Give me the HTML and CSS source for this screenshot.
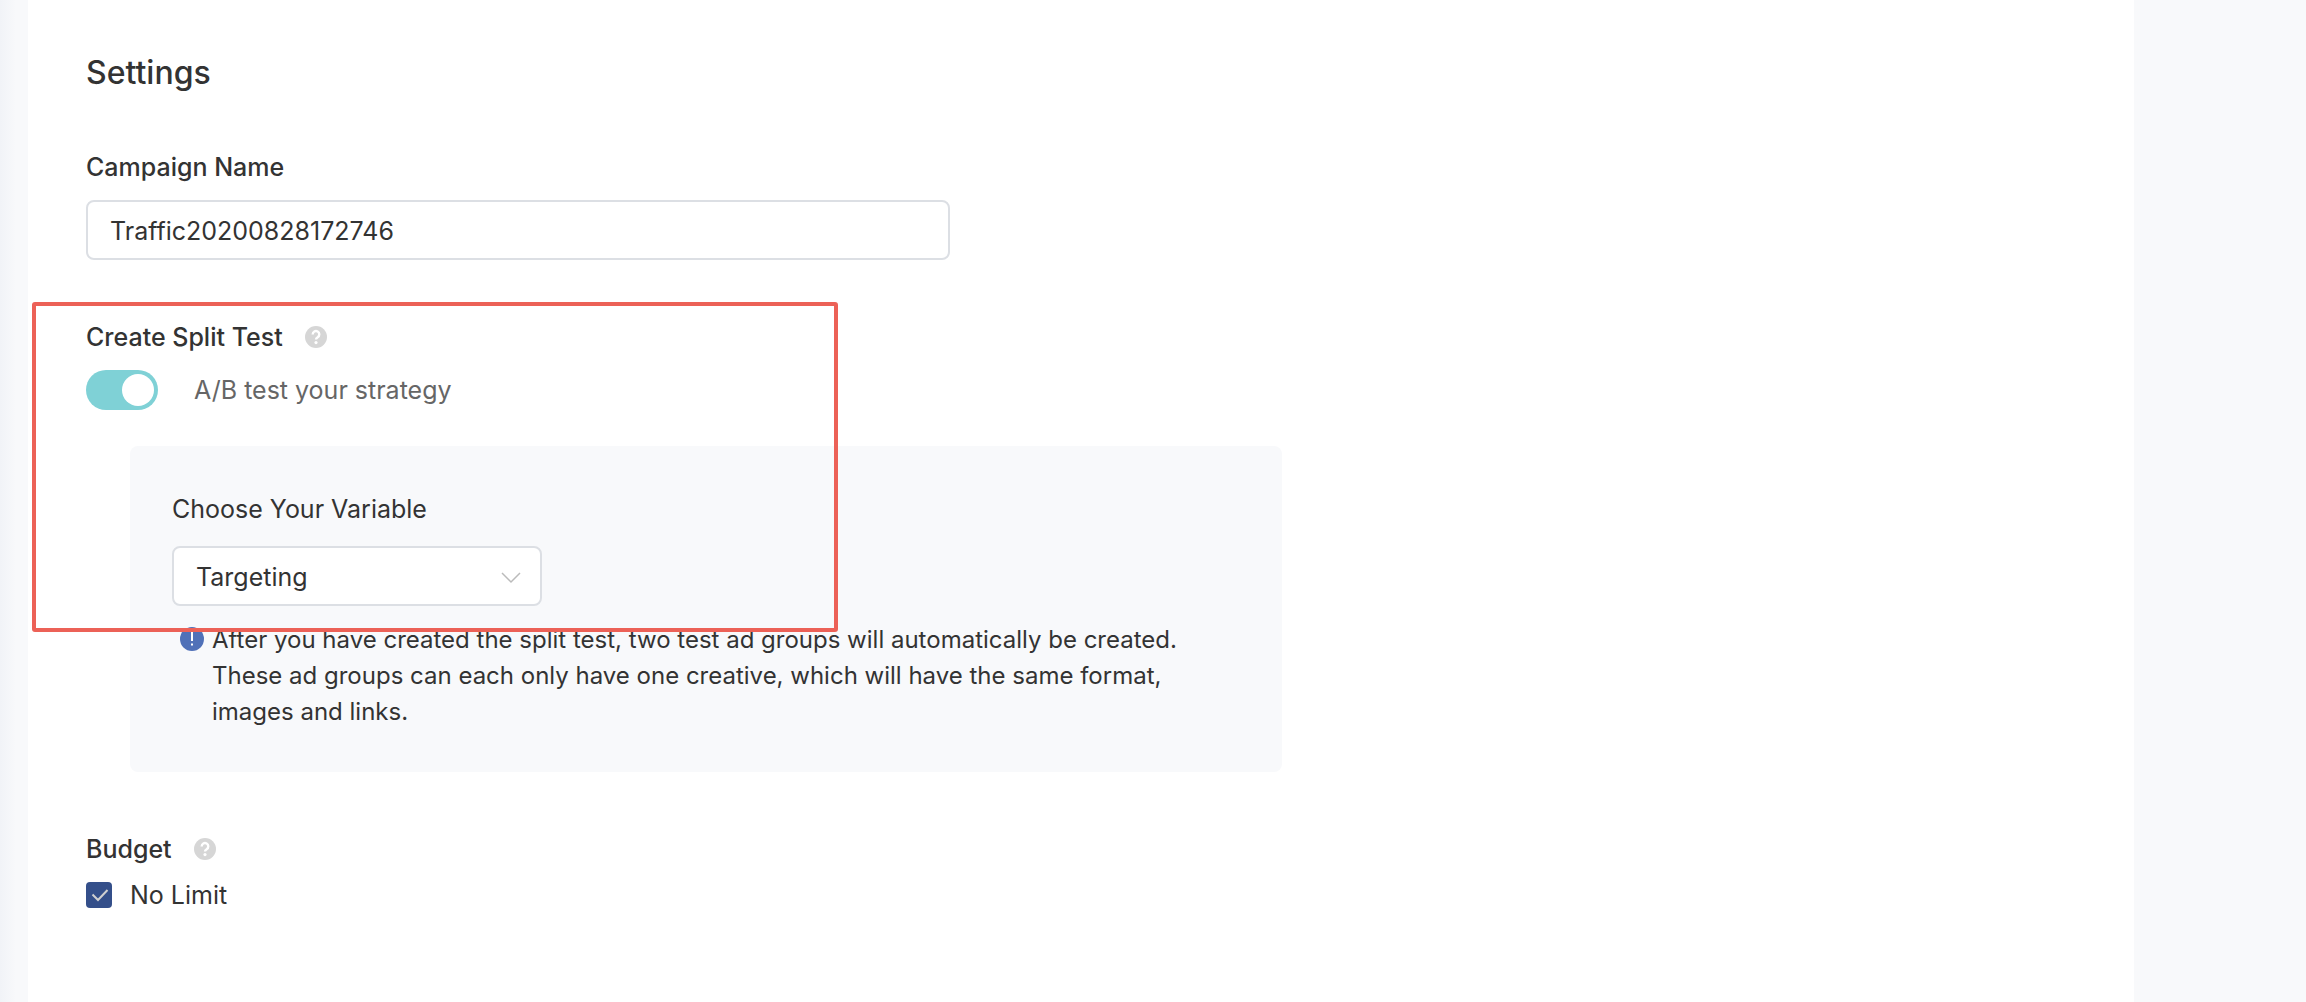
FILE: index.html
```html
<!DOCTYPE html>
<html lang="en">
<head>
<meta charset="utf-8">
<meta name="viewport" content="width=device-width, initial-scale=1">
<title>Settings</title>
<link rel="stylesheet" href="styles.css">
</head>
<body>
<main class="card">
  <h1 class="title">Settings</h1>
  <form class="form">
    <section class="field">
      <label class="label" for="campaign">Campaign Name</label>
      <input class="text-input" id="campaign" type="text" value="Traffic20200828172746">
    </section>

    <section class="field split">
      <div class="label-row">
        <h2 class="label">Create Split Test</h2>
        <svg class="help" viewBox="0 0 22 22" aria-hidden="true"><circle cx="11" cy="11" r="11"/><path d="M7.700 8.400a3.300 3.300 0 1 1 5 2.800c-1.100.7-1.700 1.100-1.700 2.300"/><circle class="dot" cx="11" cy="16.600" r="1.600"/></svg>
      </div>
      <div class="toggle-row">
        <input class="toggle" id="split" type="checkbox" role="switch" checked>
        <label class="hint" for="split">A/B test your strategy</label>
      </div>
      <div class="panel">
        <label class="sub-label" for="variable">Choose Your Variable</label>
        <div class="select-wrap">
          <select class="select" id="variable"><option>Targeting</option></select>
          <svg class="chevron" viewBox="0 0 20 16" aria-hidden="true"><path d="M1 5l9 9 9-9"/></svg>
        </div>
        <div class="note">
          <svg class="info" viewBox="0 0 24 24" aria-hidden="true"><circle cx="12" cy="12" r="12"/><path d="M12 5v9M12 16.500v2"/></svg>
          <p class="note-text">After you have created the split test, two test ad groups will automatically be created. These ad groups can each only have one creative, which will have the same format, images and links.</p>
        </div>
      </div>
      <div class="highlight"></div>
    </section>

    <section class="field">
      <div class="label-row">
        <h2 class="label">Budget</h2>
        <svg class="help" viewBox="0 0 22 22" aria-hidden="true"><circle cx="11" cy="11" r="11"/><path d="M7.700 8.400a3.300 3.300 0 1 1 5 2.800c-1.100.7-1.700 1.100-1.700 2.300"/><circle class="dot" cx="11" cy="16.600" r="1.600"/></svg>
      </div>
      <div class="check-row">
        <span class="check-wrap">
          <input class="check" id="nolimit" type="checkbox" checked>
          <svg class="tick" viewBox="0 0 26 26" aria-hidden="true"><path d="M6.500 12.500l5.500 5.500 9.500-10"/></svg>
        </span>
        <label for="nolimit">No Limit</label>
      </div>
    </section>
  </form>
</main>
</body>
</html>
```
FILE: styles.css
```css
* {
  box-sizing: border-box;
}

body {
  margin: 0;
  padding: 0 172px 0 28px;
  background: #f8f9fb linear-gradient(to right, #f1f3f7, #f8f9fb) no-repeat 0 0 / 16px 100%;
  color: #333;
  font-family: Inter, "Liberation Sans", sans-serif;
  font-size: 25px;
  line-height: 36px;
}

.card {
  min-height: 100vh;
  padding: 53px 58px;
  background: #fff;
}

.title {
  margin: 0 0 56px;
  font-size: 32px;
  font-weight: 500;
  line-height: 40px;
}

.form {
  display: flex;
  flex-direction: column;
  gap: 59px;
}

.field {
  display: flex;
  flex-direction: column;
}

.label {
  margin: 0;
  font-size: 25px;
  font-weight: 500;
}

.label-row {
  display: flex;
  align-items: center;
  gap: 22px;
}

.help {
  width: 22px;
  height: 22px;
  fill: #d6d6d6;
}

.help path {
  fill: none;
  stroke: #fff;
  stroke-width: 2.4;
}

.help .dot {
  fill: #fff;
}

.text-input,
.select {
  width: 100%;
  height: 60px;
  padding: 2px 22px 0;
  border: 2px solid #dcdfe4;
  border-radius: 8px;
  background: #fff;
  color: #333;
  font: inherit;
}

.text-input {
  max-width: 864px;
  margin-top: 15px;
}

.split {
  position: relative;
}

.toggle-row {
  display: flex;
  align-items: center;
  gap: 36px;
  margin-top: 15px;
}

.toggle {
  display: flex;
  appearance: none;
  width: 72px;
  height: 40px;
  margin: 0;
  padding: 4px;
  border-radius: 20px;
  background: #7fd1d6;
}

.toggle::before {
  content: "";
  width: 32px;
  height: 32px;
  border-radius: 50%;
  background: #fff;
}

.toggle:checked {
  justify-content: flex-end;
}

.hint {
  color: #666;
}

.panel {
  display: flex;
  flex-direction: column;
  max-width: 1152px;
  margin: 36px 0 0 44px;
  padding: 45px 42px 42px;
  border-radius: 8px;
  background: #f8f9fb;
}

.select-wrap {
  display: grid;
  align-items: center;
  max-width: 370px;
  margin-top: 19px;
}

.select {
  grid-area: 1 / 1;
  appearance: none;
}

.chevron {
  grid-area: 1 / 1;
  justify-self: end;
  width: 20px;
  height: 16px;
  margin-right: 21px;
  fill: none;
  stroke: #bbb;
  stroke-width: 1.5;
  pointer-events: none;
}

.note {
  display: flex;
  gap: 8px;
  margin-top: 16px;
  padding-left: 8px;
}

.info {
  flex: none;
  width: 24px;
  height: 24px;
  margin-top: 5px;
  fill: #5071b8;
}

.info path {
  stroke: #fff;
  stroke-width: 2;
}

.note-text {
  margin: 0;
  font-size: 24px;
}

.highlight {
  position: absolute;
  top: -17px;
  left: -54px;
  width: 806px;
  height: 330px;
  border: 4px solid #ec6157;
  border-radius: 3px;
  pointer-events: none;
}

.check-row {
  display: flex;
  align-items: center;
  gap: 18px;
  margin-top: 10px;
}

.check-wrap {
  display: grid;
}

.check {
  grid-area: 1 / 1;
  appearance: none;
  width: 26px;
  height: 26px;
  margin: 0;
  border-radius: 4px;
  background: #344f8a;
}

.tick {
  grid-area: 1 / 1;
  width: 26px;
  height: 26px;
  fill: none;
  stroke: #d0d0d0;
  stroke-width: 2;
  pointer-events: none;
}
```
